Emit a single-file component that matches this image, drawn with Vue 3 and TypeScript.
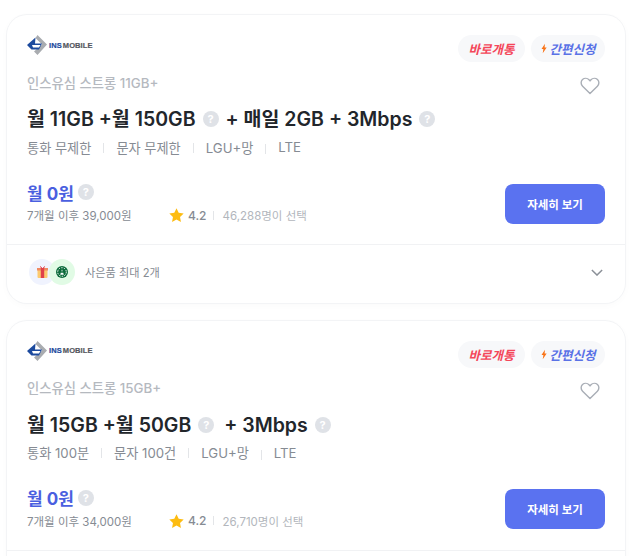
<script setup lang="ts">
interface Part {
  text: string
  tight?: boolean
}
interface Plan {
  name: string
  parts: Part[]
  specs: string[]
  after: string
  count: string
  gifts: boolean
}
const plans: Plan[] = [
  {
    name: '인스유심 스트롱 11GB+',
    parts: [{ text: '월 11GB +월 150GB' }, { text: '+ 매일 2GB + 3Mbps' }],
    specs: ['통화 무제한', '문자 무제한', 'LGU+망', 'LTE'],
    after: '7개월 이후 39,000원',
    count: '46,288명이 선택',
    gifts: true,
  },
  {
    name: '인스유심 스트롱 15GB+',
    parts: [{ text: '월 15GB +월 50GB' }, { text: ' + 3Mbps', tight: true }],
    specs: ['통화 100분', '문자 100건', 'LGU+망', 'LTE'],
    after: '7개월 이후 34,000원',
    count: '26,710명이 선택',
    gifts: false,
  },
]
</script>

<template>
  <div class="page">
    <article v-for="plan in plans" :key="plan.name" class="card">
      <div class="body">
        <div class="top">
          <div class="logo">
            <svg width="20" height="20" viewBox="0 0 20 20">
              <path d="M10.500 0 20 9.500 10.500 20 7 16.500 15 9.500 8.500 3Z" fill="#a9acb0" />
              <path d="M8.500 2.500 0 10 4.500 14.500H12L15 8.500H8Z" fill="#1c4a9e" />
              <path d="M5 10H13.500L12 12.500H6Z" fill="#fff" />
            </svg>
            <span class="logo-ins">INS</span><span class="logo-mobile">MOBILE</span>
          </div>
          <div class="chips">
            <span class="chip red">바로개통</span>
            <span class="chip blue">
              <svg width="6" height="11" viewBox="0 0 7 11"><path d="M4.600 0 .6 6.200h2.200L2 11 6.600 4.400H4.200Z" fill="#f97316" /></svg>
              간편신청
            </span>
          </div>
        </div>
        <div class="name-row">
          <span class="name">{{ plan.name }}</span>
          <svg class="heart" width="20" height="18" viewBox="0 0 20 18">
            <path d="M10 16.600 2.600 9.300C.6 7.300.7 4.300 2.500 2.600 4.400.9 7.300 1 9 2.800L10 3.900l1-1.100c1.700-1.800 4.600-1.900 6.500-.2 1.800 1.700 1.900 4.700-.1 6.700Z" fill="none" stroke="#a9aeb6" stroke-width="1.400" stroke-linejoin="round" />
          </svg>
        </div>
        <h2 class="title">
          <template v-for="part in plan.parts" :key="part.text">
            <span class="title-part" :class="{ tight: part.tight }">{{ part.text }}</span>
            <span class="help">?</span>
          </template>
        </h2>
        <div class="specs">
          <span v-for="spec in plan.specs" :key="spec" class="spec">{{ spec }}</span>
        </div>
        <div class="bottom">
          <div class="price-block">
            <div class="price">월 0원 <span class="help small">?</span></div>
            <div class="meta">
              <span class="after">{{ plan.after }}</span>
              <span class="rating">
                <svg width="15" height="14" viewBox="0 0 24 23"><path d="M12 .5 15.600 8l8.200 1.100-6 5.700 1.500 8.100L12 19l-7.300 3.900 1.500-8.100-6-5.700L8.400 8Z" fill="#fdbc11" /></svg>
                <b>4.2</b>
              </span>
              <span class="count">{{ plan.count }}</span>
            </div>
          </div>
          <button class="cta" type="button">자세히 보기</button>
        </div>
      </div>
      <footer v-if="plan.gifts" class="foot">
        <div class="gifts">
          <span class="gift one">
            <svg width="11" height="12" viewBox="0 0 11 12">
              <rect x="0.500" y="3" width="10" height="9" rx="1" fill="#fcc96f" />
              <rect x="0" y="2" width="11" height="2.500" fill="#f08a62" />
              <rect x="3.800" y="2" width="3.400" height="10" fill="#e0404a" />
              <path d="M5.500 2.500 3 .5M5.500 2.500 8 .5" stroke="#e0404a" stroke-width="1" />
            </svg>
          </span>
          <span class="gift two">
            <svg width="12" height="12" viewBox="0 0 12 12">
              <circle cx="6" cy="6" r="6" fill="#0b6b3a" />
              <circle cx="6" cy="6" r="4.300" fill="none" stroke="#fff" stroke-width="1" stroke-dasharray="1.500 1.200" />
              <path d="M6 3.200 7.800 8.800H4.200Z" fill="#fff" />
              <circle cx="6" cy="6" r="1" fill="#0b6b3a" />
            </svg>
          </span>
        </div>
        <span class="gift-text">사은품 최대 2개</span>
        <svg class="chev" width="12" height="7" viewBox="0 0 14 8"><path d="M1 1l6 6 6-6" fill="none" stroke="#8b9098" stroke-width="1.700" /></svg>
      </footer>
    </article>
  </div>
</template>

<style scoped>
.page {
  height: 556px;
  overflow: hidden;
  box-sizing: border-box;
  padding: 15px 13px 0 7px;
  background: #fff;
  font-family: Inter, "Noto Sans CJK KR", sans-serif;
  display: flex;
  flex-direction: column;
  gap: 17.700px;
}
.card {
  flex: none;
  height: 288px;
  box-sizing: border-box;
  background: #fff;
  border-radius: 20px;
  box-shadow: 0 0 0 1px #f3f4f6, 0 2px 8px rgba(0, 0, 0, 0.025);
  display: flex;
  flex-direction: column;
}
.body {
  height: 230px;
  flex: none;
  box-sizing: border-box;
  padding: 20px 20px 0;
  border-bottom: 1px solid #f1f2f4;
}
.top {
  height: 27px;
  display: flex;
  justify-content: space-between;
  align-items: flex-start;
}
.logo {
  display: flex;
  align-items: center;
  height: 20px;
  font-family: "Liberation Sans", sans-serif;
  font-weight: 700;
  font-size: 7.500px;
  letter-spacing: 0.100px;
  -webkit-text-stroke: 0.200px currentColor;
}
.logo-ins {
  margin-left: 2px;
  color: #1c4a9e;
}
.logo-mobile {
  margin-left: 1px;
  color: #55585e;
}
.chips {
  display: flex;
  gap: 6px;
}
.chip {
  height: 27px;
  box-sizing: border-box;
  display: flex;
  align-items: center;
  border-radius: 14px;
  background: #f7f8fa;
  font-size: 12.500px;
  font-weight: 700;
  font-style: italic;
}
.red {
  padding: 0 10.500px;
  color: #f4475a;
}
.blue {
  padding: 0 9.500px 0 10px;
  gap: 2.500px;
  color: #5a72e6;
}
.name-row {
  margin-top: 7px;
  height: 26px;
  display: flex;
  justify-content: space-between;
  align-items: center;
}
.name {
  font-size: 13.300px;
  font-weight: 500;
  color: #b5b9bf;
}
.heart {
  margin-right: 5px;
  margin-top: 7px;
}
.title {
  margin: 11px 0 0;
  height: 26px;
  display: flex;
  align-items: center;
  font-size: 19.500px;
  font-weight: 600;
  line-height: 26px;
  color: #22262b;
  white-space: pre;
}
.title-part + .help {
  margin-left: 7px;
}
.help + .title-part {
  margin-left: 7px;
}
.help + .title-part.tight {
  margin-left: 5px;
}
.help {
  flex: none;
  width: 16px;
  height: 16px;
  border-radius: 50%;
  background: #dfe2e7;
  color: #fff;
  font-size: 11px;
  font-weight: 700;
  line-height: 16px;
  text-align: center;
  display: inline-block;
}
.specs {
  margin-top: 5px;
  height: 20px;
  display: flex;
  align-items: center;
  font-size: 13.200px;
  color: #868b93;
}
.spec + .spec {
  margin-left: 12px;
  padding-left: 13px;
  position: relative;
}
.spec + .spec::before {
  content: "";
  position: absolute;
  left: 0;
  top: 5px;
  height: 10px;
  width: 1px;
  background: #e3e5e8;
}
.bottom {
  margin-top: 26.700px;
  display: flex;
  justify-content: space-between;
  align-items: flex-start;
}
.price-block {
  margin-top: -2.500px;
}
.price {
  height: 22px;
  display: flex;
  align-items: center;
  gap: 4px;
  font-size: 17px;
  font-weight: 700;
  color: #4a5fe0;
}
.meta {
  margin-top: 4px;
  height: 16px;
  display: flex;
  align-items: center;
  font-size: 11.500px;
  color: #868b93;
}
.after {
  width: 142px;
}
.rating {
  display: flex;
  align-items: center;
  gap: 4px;
  padding-right: 7px;
  position: relative;
  font-size: 12px;
}
.rating b {
  font-weight: 500;
}
.rating::after {
  content: "";
  position: absolute;
  right: 0;
  top: 3px;
  height: 9px;
  width: 1px;
  background: #e3e5e8;
}
.count {
  margin-left: 9px;
  color: #b2b6bc;
}
.cta {
  width: 100px;
  height: 40px;
  border: 0;
  border-radius: 8px;
  background: #5a72f0;
  color: #fff;
  font: 700 11.500px Inter, "Noto Sans CJK KR", sans-serif;
}
.foot {
  flex: 1;
  padding: 0 22px 4px 22px;
  display: flex;
  align-items: center;
}
.gifts {
  display: flex;
}
.gift {
  width: 26px;
  height: 26px;
  border-radius: 50%;
  display: flex;
  align-items: center;
  justify-content: center;
}
.one {
  background: #f0f3fe;
}
.two {
  margin-left: -6px;
  background: #e1fbe5;
}
.gift-text {
  margin-left: 10px;
  font-size: 11.200px;
  color: #868b93;
}
.chev {
  margin-left: auto;
  margin-top: 1px;
}
</style>
